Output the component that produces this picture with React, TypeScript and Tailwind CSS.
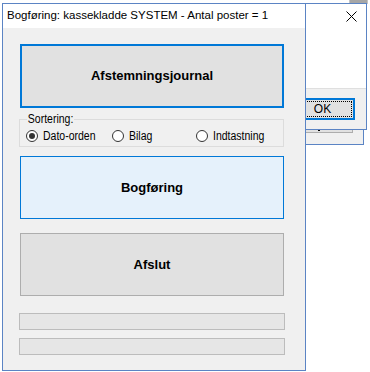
import React from "react";

const ui = { fontFamily: '"Liberation Sans", Arial, sans-serif' };

const Radio = ({ label, checked = false, width }: { label: string; checked?: boolean; width: string }) => (
  <div className={`flex items-center gap-[5px] ${width}`}>
    <span className="w-[12px] h-[12px] rounded-full border border-[#333] bg-white flex items-center justify-center shrink-0">
      {checked && <span className="w-[6px] h-[6px] rounded-full bg-[#333]" />}
    </span>
    <span className="inline-block whitespace-nowrap text-[12.5px] leading-[14px] text-black origin-left scale-x-[0.84]">
      {label}
    </span>
  </div>
);

export default function App() {
  return (
    <div className="relative w-[370px] h-[372px] bg-white overflow-hidden" style={ui}>
      {/* window peeking out far behind */}
      <div className="absolute left-[349px] -top-[4px] w-[19px] h-[8px] bg-[#a6a6a6] border border-[#c4c4c4]" />

      {/* window behind the dialog */}
      <div className="absolute left-[150px] top-[20px] w-[214px] h-[125px] bg-[#f0f0f0] border border-[#5b84c4]">
        <div className="absolute right-[10px] bottom-[11px] w-[70px] h-[24px] bg-[#e1e1e1] border border-[#adadad] flex items-end justify-center">
          <span className="w-[2px] h-[2px] bg-black mb-[1px] ml-[2px]" />
        </div>
      </div>

      {/* message dialog */}
      <div className="absolute left-[150px] top-[3px] w-[217px] h-[127px] bg-white border border-[#5b84c4] flex flex-col">
        <div className="h-[84px] relative">
          <svg className="absolute right-[9px] top-[7px]" width="11" height="11" viewBox="0 0 11 11">
            <path d="M0.5 0.5 L10.5 10.5 M10.5 0.5 L0.5 10.5" stroke="#000" strokeWidth="1" />
          </svg>
        </div>
        <div className="flex-1 bg-[#f0f0f0] border-t border-[#dfdfdf] flex justify-end pr-[11px] pt-[9px]">
          <div className="w-[65px] h-[22px] border-2 border-[#0078d7] bg-[#e1e1e1] p-[1px]">
            <div className="w-full h-full border border-dotted border-black flex items-center justify-center text-[12px] text-black">
              OK
            </div>
          </div>
        </div>
      </div>

      {/* main window */}
      <div className="absolute left-[2px] top-[3px] w-[304px] h-[368px] bg-[#f0f0f0] border border-[#5b84c4] flex flex-col">
        <div className="h-[24px] bg-white flex items-center pl-[4px] text-[11.5px] text-black whitespace-nowrap">
          Bogføring: kassekladde SYSTEM - Antal poster = 1
        </div>
        <div className="flex flex-col pl-[17px]">
          <button className="mt-[16px] w-[264px] h-[64px] border-2 border-[#0078d7] bg-[#e1e1e1] text-[13px] font-bold text-black">
            Afstemningsjournal
          </button>

          <div className="relative mt-[11px] -ml-[1px] w-[265px] h-[28px] border border-[#dcdcdc] flex items-center pl-[6px] pt-[5px]">
            <span className="absolute -top-[8px] left-[7px] px-[1px] bg-[#f0f0f0] text-[12.5px] leading-[14px] text-black inline-block origin-left scale-x-[0.84]">
              Sortering:
            </span>
            <Radio label="Dato-orden" checked width="w-[86px]" />
            <Radio label="Bilag" width="w-[84px]" />
            <Radio label="Indtastning" width="w-[80px]" />
          </div>

          <button className="mt-[9px] w-[264px] h-[63px] border border-[#0078d7] bg-[#e5f1fb] text-[13px] font-bold text-black">
            Bogføring
          </button>

          <button className="mt-[14px] w-[264px] h-[63px] border border-[#adadad] bg-[#e1e1e1] text-[13px] font-bold text-black">
            Afslut
          </button>

          <div className="mt-[17px] -ml-[1px] w-[266px] h-[17px] bg-[#e6e6e6] border border-[#bcbcbc]" />
          <div className="mt-[8px] -ml-[1px] w-[266px] h-[17px] bg-[#e6e6e6] border border-[#bcbcbc]" />
        </div>
      </div>
    </div>
  );
}
